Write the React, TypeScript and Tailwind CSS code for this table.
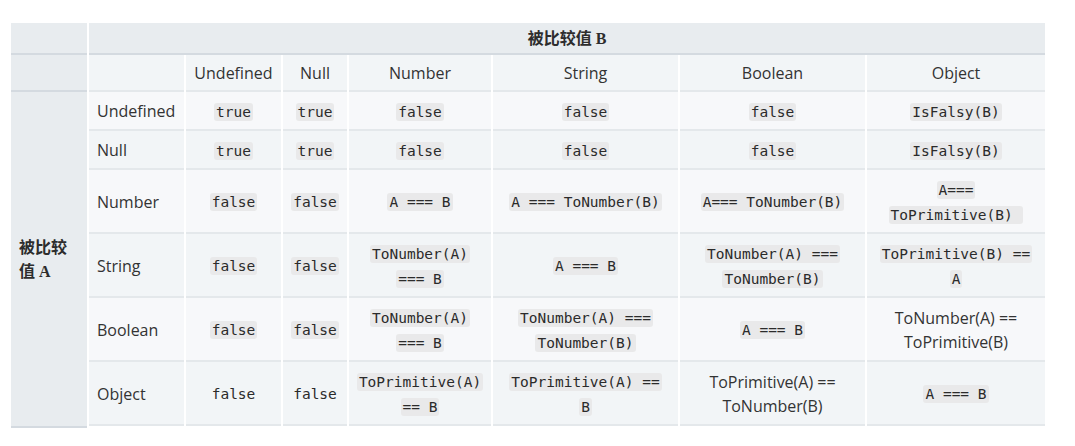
import React from "react";

type Cell =
  | { kind: "code"; lines: string[] }
  | { kind: "mono"; lines: string[] }
  | { kind: "text"; lines: string[] };

const c = (...lines: string[]): Cell => ({ kind: "code", lines });
const m = (...lines: string[]): Cell => ({ kind: "mono", lines });
const t = (...lines: string[]): Cell => ({ kind: "text", lines });

const headers = ["Undefined", "Null", "Number", "String", "Boolean", "Object"];

const rows: { label: string; cells: Cell[] }[] = [
  { label: "Undefined", cells: [c("true"), c("true"), c("false"), c("false"), c("false"), c("IsFalsy(B)")] },
  { label: "Null", cells: [c("true"), c("true"), c("false"), c("false"), c("false"), c("IsFalsy(B)")] },
  {
    label: "Number",
    cells: [c("false"), c("false"), c("A === B"), c("A === ToNumber(B)"), c("A=== ToNumber(B)"), c("A===", "ToPrimitive(B) ")],
  },
  {
    label: "String",
    cells: [c("false"), c("false"), c("ToNumber(A)", "=== B"), c("A === B"), c("ToNumber(A) ===", "ToNumber(B)"), c("ToPrimitive(B) ==", "A")],
  },
  {
    label: "Boolean",
    cells: [c("false"), c("false"), c("ToNumber(A)", "=== B"), c("ToNumber(A) ===", "ToNumber(B)"), c("A === B"), t("ToNumber(A) ==", "ToPrimitive(B)")],
  },
  {
    label: "Object",
    cells: [m("false"), m("false"), c("ToPrimitive(A)", "== B"), c("ToPrimitive(A) ==", "B"), t("ToPrimitive(A) ==", "ToNumber(B)"), c("A === B")],
  },
];

const monoFont = { fontFamily: "'DejaVu Sans Mono', 'Liberation Mono', monospace" };

function CellContent({ cell }: { cell: Cell }) {
  return (
    <div className="text-center leading-6">
      {cell.lines.map((ln, i) => (
        <div key={i} className="whitespace-pre">
          {cell.kind === "code" ? (
            <span
              className="rounded-[3px] bg-[#e9e9ea] px-[2px] py-px text-[14.5px] text-[#2b2b2b]"
              style={monoFont}
            >
              {ln}
            </span>
          ) : cell.kind === "mono" ? (
            <span className="px-[2px] text-[14.5px] text-[#2b2b2b]" style={monoFont}>
              {ln}
            </span>
          ) : (
            <span>{ln}</span>
          )}
        </div>
      ))}
    </div>
  );
}

export default function App() {
  const serifBold = { fontFamily: "'Liberation Serif', 'Noto Sans CJK SC', serif" };
  return (
    <div className="min-h-[446px] w-[1075px] bg-white pl-[11px] pt-[23px]" style={{ fontFamily: "'Open Sans', 'Noto Sans', sans-serif" }}>
      <div className="grid w-fit grid-cols-[76px_95px_95px_64px_142px_185px_185px_178px] grid-rows-[32px_37px_39px_39px_64px_64px_64px_64px] gap-x-[2px] text-[16px] text-[#333]">
        {/* Row 1 */}
        <div className="border-b-2 border-[#d4dae0] bg-[#e8ecef]" />
        <div
          className="col-span-7 flex items-center justify-center border-b-2 border-[#d4dae0] bg-[#e8ecef] pt-[2px] font-bold text-[#2d2d2d]"
          style={serifBold}
        >
          被比较值 B
        </div>

        {/* Row 2 */}
        <div className="border-b-2 border-[#d4dae0] bg-[#e8ecef]" />
        <div className="border-b-2 border-[#e4e8eb] bg-[#f2f5f7]" />
        {headers.map((h) => (
          <div key={h} className="flex items-center justify-center border-b-2 border-[#e4e8eb] bg-[#f2f5f7] pt-px">
            {h}
          </div>
        ))}

        {/* Left tall header */}
        <div
          className="row-span-6 -mb-[2px] flex items-center border-b-2 border-[#d4dae0] bg-[#e8ecef] px-2 pt-px font-bold leading-6 text-[#2d2d2d]"
          style={serifBold}
        >
          <span>
            被比较
            <br />
            值 A
          </span>
        </div>

        {rows.map((r, ri) => {
          const bg = ri % 2 === 0 ? "bg-[#f7f8fa]" : "bg-[#f2f5f7]";
          return (
            <React.Fragment key={r.label}>
              <div className={`flex items-center border-b-2 border-[#e4e8eb] px-2 pt-px ${bg}`}>{r.label}</div>
              {r.cells.map((cell, ci) => (
                <div key={ci} className={`flex items-center justify-center border-b-2 border-[#e4e8eb] px-2 pt-px ${bg}`}>
                  <CellContent cell={cell} />
                </div>
              ))}
            </React.Fragment>
          );
        })}
      </div>
    </div>
  );
}
